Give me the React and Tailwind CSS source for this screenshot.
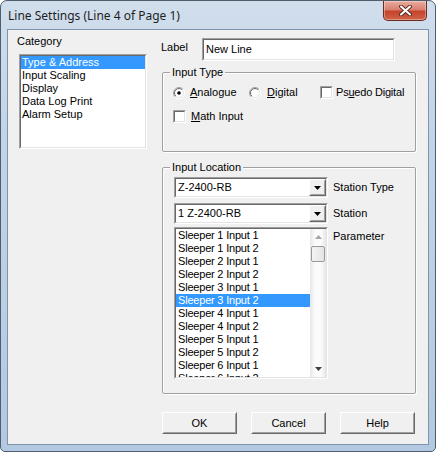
import React from 'react';

const ui = "font-['Liberation_Sans',Arial,sans-serif] text-[11px] leading-[13px] text-black";

// classic sunken edge: outer grey/white, inner dark/light
const Sunken = ({ className = '', children }) => (
    <div className={`border border-t-[#a0a0a0] border-l-[#a0a0a0] border-b-white border-r-white ${className}`}>
        <div className="w-full h-full border border-t-[#696969] border-l-[#696969] border-b-[#e3e3e3] border-r-[#e3e3e3] bg-white overflow-hidden">
            {children}
        </div>
    </div>
);

const Raised = ({ className = '', children }) => (
    <div className={`border border-t-white border-l-white border-b-[#696969] border-r-[#696969] ${className}`}>
        <div className="w-full h-full border border-t-[#f0f0f0] border-l-[#f0f0f0] border-b-[#a0a0a0] border-r-[#a0a0a0] bg-[#f0f0f0] flex items-center justify-center">
            {children}
        </div>
    </div>
);

const Radio = ({ checked }) => (
    <svg width="12" height="12" viewBox="0 0 12 12" className="shrink-0">
        <defs>
            <linearGradient id="ro" x1="0" y1="0" x2="1" y2="1">
                <stop offset="0.45" stopColor="#a0a0a0" />
                <stop offset="0.55" stopColor="#ffffff" />
            </linearGradient>
            <linearGradient id="ri" x1="0" y1="0" x2="1" y2="1">
                <stop offset="0.45" stopColor="#696969" />
                <stop offset="0.55" stopColor="#e3e3e3" />
            </linearGradient>
        </defs>
        <circle cx="6" cy="6" r="5.5" fill="none" stroke="url(#ro)" strokeWidth="1" />
        <circle cx="6" cy="6" r="4.5" fill="#fff" stroke="url(#ri)" strokeWidth="1" />
        {checked && <circle cx="6" cy="6" r="1.8" fill="#000" />}
    </svg>
);

const Check = () => <Sunken className="w-[13px] h-[13px] shrink-0" />;

const Arrow = ({ up, color = '#000' }) => (
    <svg width="7" height="4" viewBox="0 0 7 4">
        <path d={up ? 'M3.5 0 L7 4 L0 4 Z' : 'M0 0 L7 0 L3.5 4 Z'} fill={color} />
    </svg>
);

const Combo = ({ value }) => (
    <Sunken className="w-[154px] h-[21px]">
        <div className="flex h-full">
            <div className="flex-1 pl-[2px] flex items-center">{value}</div>
            <Raised className="w-[17px] h-full">
                <Arrow />
            </Raised>
        </div>
    </Sunken>
);

const Group = ({ title, className = '', children }) => (
    <div className={`relative border border-[#a0a0a0] rounded-[2px] shadow-[inset_1px_1px_0_#fff,1px_1px_0_#fff] ${className}`}>
        <span className="absolute -top-[7px] left-[7px] px-[2px] bg-[#f0f0f0]">{title}</span>
        {children}
    </div>
);

const Btn = ({ children }) => (
    <Raised className="w-[75px] h-[22px]">{children}</Raised>
);

const params = [
    'Sleeper 1 Input 1', 'Sleeper 1 Input 2', 'Sleeper 2 Input 1', 'Sleeper 2 Input 2',
    'Sleeper 3 Input 1', 'Sleeper 3 Input 2', 'Sleeper 4 Input 1', 'Sleeper 4 Input 2',
    'Sleeper 5 Input 1', 'Sleeper 5 Input 2', 'Sleeper 6 Input 1', 'Sleeper 6 Input 2',
];

const categories = ['Type & Address', 'Input Scaling', 'Display', 'Data Log Print', 'Alarm Setup'];

export default function App() {
    return (
        <div className="w-[436px] h-[452px] bg-white">
            <div className="relative flex flex-col w-[436px] h-[452px] rounded-t-[7px] rounded-b-[5px] border border-[#4f5d6f] bg-[linear-gradient(180deg,#d0deec_0%,#c2d4e8_30%,#b3c9e1_100%)] overflow-hidden">
                {/* title bar */}
                <div className="h-[28px] flex items-center pl-[7px] pt-[1px] font-['Noto_Sans',sans-serif] text-[12px] text-[#1e1e1e]">
                    Line Settings (Line 4 of Page 1)
                </div>
                <div className="absolute top-0 right-[8px] w-[44px] h-[20px] rounded-b-[5px] border border-t-0 border-[#6a2a1e] bg-[linear-gradient(180deg,#e8ad9f_0%,#d98070_45%,#c6432c_55%,#cf6448_100%)] flex items-center justify-center shadow-[inset_0_0_0_1px_rgba(255,255,255,0.35)]">
                    <svg width="13" height="11" viewBox="0 0 13 11">
                        <path d="M2 1.5 L11 9.5 M11 1.5 L2 9.5" stroke="#5a2a22" strokeWidth="3.8" strokeLinecap="round" />
                        <path d="M2 1.5 L11 9.5 M11 1.5 L2 9.5" stroke="#fff" strokeWidth="2" strokeLinecap="round" />
                    </svg>
                </div>

                {/* client area */}
                <div className={`mx-[6px] h-[416px] border border-[#7f93ac] bg-[#f0f0f0] flex ${ui}`}>
                    {/* left column */}
                    <div className="w-[153px] pl-[9px] pt-[5px]">
                        <div>Category</div>
                        <Sunken className="mt-[6px] ml-[2px] w-[128px] h-[95px]">
                            {categories.map((c, i) => (
                                <div key={c} className={`h-[13px] pl-[1px] ${i === 0 ? 'bg-[#3399ff] text-white' : ''}`}>{c}</div>
                            ))}
                        </Sunken>
                    </div>

                    {/* right column */}
                    <div className="w-[256px] flex flex-col">
                        <div className="mt-[8px] flex items-start">
                            <div className="w-[41px] mt-[3px]">Label</div>
                            <Sunken className="w-[193px] h-[23px]">
                                <div className="h-full flex items-center pl-[2px]">New Line</div>
                            </Sunken>
                        </div>

                        <Group title="Input Type" className="ml-[1px] mt-[11px] w-[254px] h-[80px]">
                            <div className="pl-[10px] pt-[13px] flex flex-col gap-[11px]">
                                <div className="flex items-center h-[13px]">
                                    <div className="w-[76px] flex items-center gap-[5px]">
                                        <Radio checked />
                                        <span><u>A</u>nalogue</span>
                                    </div>
                                    <div className="w-[71px] flex items-center gap-[6px]">
                                        <Radio />
                                        <span><u>D</u>igital</span>
                                    </div>
                                    <div className="flex items-center gap-[3px] tracking-[-0.2px]">
                                        <Check />
                                        <span>Ps<u>u</u>edo Digital</span>
                                    </div>
                                </div>
                                <div className="flex items-center h-[13px] gap-[5px]">
                                    <Check />
                                    <span><u>M</u>ath Input</span>
                                </div>
                            </div>
                        </Group>

                        <Group title="Input Location" className="ml-[1px] mt-[15px] w-[254px] h-[227px]">
                            <div className="pl-[11px] pt-[9px] flex flex-col">
                                <div className="flex items-center gap-[5px]">
                                    <Combo value="Z-2400-RB" />
                                    <span>Station Type</span>
                                </div>
                                <div className="mt-[5px] flex items-center gap-[5px]">
                                    <Combo value="1 Z-2400-RB" />
                                    <span>Station</span>
                                </div>
                                <div className="mt-[3px] flex items-start gap-[5px]">
                                    <Sunken className="w-[154px] h-[152px]">
                                        <div className="flex h-full">
                                            <div className="flex-1 overflow-hidden tracking-[-0.2px]">
                                                {params.map((p, i) => (
                                                    <div key={p} className={`h-[13px] pl-[2px] whitespace-nowrap ${i === 5 ? 'bg-[#3399ff] text-white' : ''}`}>{p}</div>
                                                ))}
                                            </div>
                                            <div className="w-[16px] h-full flex flex-col items-center bg-[linear-gradient(90deg,#e6e6e6,#fbfbfb_30%,#fbfbfb_70%,#e6e6e6)]">
                                                <div className="h-[16px] flex items-center justify-center">
                                                    <Arrow up color="#a6a6a6" />
                                                </div>
                                                <div className="mt-[1px] w-[14px] h-[16px] rounded-[2px] border border-[#9a9a9a] bg-[linear-gradient(90deg,#f4f4f4,#e4e4e4)]" />
                                                <div className="flex-1" />
                                                <div className="h-[16px] flex items-center justify-center">
                                                    <Arrow color="#404040" />
                                                </div>
                                            </div>
                                        </div>
                                    </Sunken>
                                    <span className="mt-[3px]">Parameter</span>
                                </div>
                            </div>
                        </Group>

                        <div className="ml-[1px] mt-[18px] flex gap-[14px]">
                            <Btn>OK</Btn>
                            <Btn>Cancel</Btn>
                            <Btn>Help</Btn>
                        </div>
                    </div>
                </div>
            </div>
        </div>
    );
}
